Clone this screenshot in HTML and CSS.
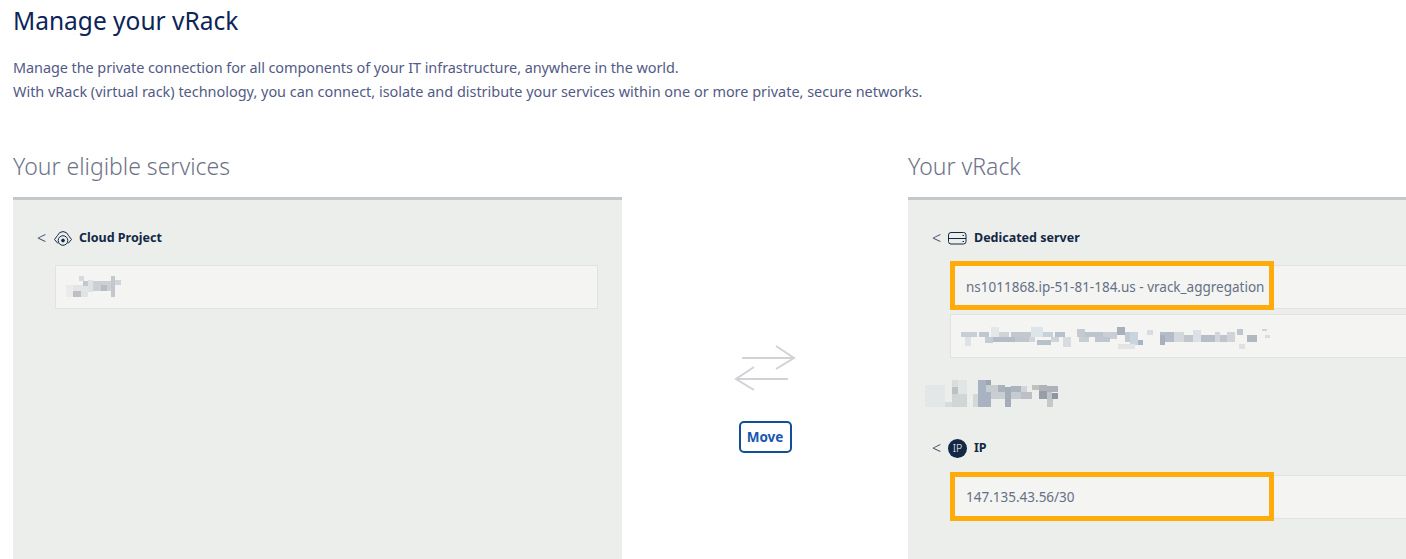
FILE: index.html
```html
<!DOCTYPE html>
<html lang="en">
<head>
<meta charset="utf-8">
<title>Manage your vRack</title>
<link rel="stylesheet" href="styles.css">
</head>
<body>
<header class="intro">
  <h1 class="title">Manage your vRack</h1>
  <p class="lead"><span class="lead-first">Manage the private connection for all components of your IT infrastructure, anywhere in the world.</span><br>With vRack (virtual rack) technology, you can connect, isolate and distribute your services within one or more private, secure networks.</p>
</header>
<main class="columns">
  <section class="col col-left">
    <h2 class="col-title">Your eligible services</h2>
    <div class="panel">
      <div class="group-head">
        <span class="chev">&lt;</span>
        <svg class="ico" width="20" height="20" viewBox="0 0 20 20" fill="none" stroke="#122844" stroke-width="1"><path d="M5 15.500 1.500 11.500 4.500 7.500A6 6.500 0 0 1 15.500 7.500L18.500 11.500 15 15.500"/><circle cx="10" cy="12.500" r="4.800"/><circle cx="10" cy="12.500" r="1.400" fill="#122844"/></svg>
        <span class="group-name">Cloud Project</span>
      </div>
      <div class="item item-left">
        <svg class="blur blur-a" width="70" height="32" viewBox="0 0 70 32">
          <rect x="6" y="13" width="8" height="12" fill="#ebebeb"/>
          <rect x="13" y="13" width="20" height="6" fill="#e3e4e4"/>
          <rect x="13" y="19" width="8" height="6" fill="#bcc0c6"/>
          <rect x="21" y="19" width="7" height="6" fill="#e2e3e3"/>
          <rect x="19" y="4" width="5" height="5" fill="#d6dade"/>
          <rect x="23" y="9" width="5" height="5" fill="#c4c8ce"/>
          <rect x="28" y="8" width="5" height="12" fill="#dfe1e2"/>
          <rect x="33" y="9" width="18" height="10" fill="#ccd0d4"/>
          <rect x="41" y="13" width="6" height="6" fill="#b8bdc4"/>
          <rect x="51" y="4" width="4" height="21" fill="#c4c8ce"/>
          <rect x="55" y="8" width="6" height="5" fill="#d2d5d8"/>
        </svg>
      </div>
    </div>
  </section>
  <section class="middle">
    <svg class="arrows" width="62" height="46" viewBox="0 0 62 46" fill="none" stroke="#d0d2d6" stroke-width="2"><path d="M8 13H60M42 1 60 13 42 24"/><path d="M54 34H2M20 22 2 34 20 45"/></svg>
    <button class="move" type="button">Move</button>
  </section>
  <section class="col col-right">
    <h2 class="col-title">Your vRack</h2>
    <div class="panel panel-right">
      <div class="group-head">
        <span class="chev">&lt;</span>
        <svg class="ico" width="20" height="20" viewBox="0 0 20 20" fill="none" stroke="#122844" stroke-width="1"><rect x="0.500" y="4.500" width="17.500" height="11.500" rx="2.500"/><path d="M0.500 10.500H18"/><path d="M14.500 7.500h1.500M14.500 13.500h1.500"/></svg>
        <span class="group-name">Dedicated server</span>
      </div>
      <div class="item item-right"><span class="item-text">ns1011868.ip-51-81-184.us - vrack_aggregation</span><span class="mark"></span></div>
      <div class="item item-right item-next">
        <svg class="blur blur-b" width="325" height="30" viewBox="0 0 325 30">
          <rect x="6" y="10" width="16" height="5" fill="#c8ced4"/>
          <rect x="10" y="15" width="6" height="9" fill="#dfe2e4"/>
          <rect x="24" y="10" width="10" height="5" fill="#c0c7ce"/>
          <rect x="36" y="5" width="8" height="10" fill="#e4e6e8"/>
          <rect x="44" y="10" width="10" height="5" fill="#d0d4d8"/>
          <rect x="56" y="10" width="20" height="5" fill="#c2c8ce"/>
          <rect x="76" y="5" width="12" height="10" fill="#dde4ea"/>
          <rect x="88" y="10" width="10" height="5" fill="#c8d0d8"/>
          <rect x="100" y="10" width="10" height="5" fill="#b8c0cc"/>
          <rect x="122" y="7" width="8" height="8" fill="#c4cad0"/>
          <rect x="130" y="10" width="18" height="5" fill="#bcc4cc"/>
          <rect x="148" y="10" width="7" height="5" fill="#c8ced4"/>
          <rect x="30" y="15" width="8" height="6" fill="#c5cbd2"/>
          <rect x="38" y="15" width="22" height="5" fill="#b4bcc8"/>
          <rect x="60" y="15" width="14" height="5" fill="#c0c6cc"/>
          <rect x="74" y="15" width="6" height="5" fill="#d0d6dc"/>
          <rect x="82" y="18" width="14" height="5" fill="#b8c0c8"/>
          <rect x="96" y="15" width="8" height="5" fill="#d0d4d8"/>
          <rect x="108" y="15" width="8" height="10" fill="#d8dce0"/>
          <rect x="124" y="15" width="10" height="5" fill="#c8cdd2"/>
          <rect x="140" y="15" width="15" height="5" fill="#c0c6ce"/>
          <rect x="155" y="10" width="7" height="7" fill="#c8ced4"/>
          <rect x="162" y="5" width="8" height="8" fill="#a8b0bc"/>
          <rect x="170" y="10" width="5" height="10" fill="#c0c8d0"/>
          <rect x="175" y="10" width="8" height="13" fill="#c8d4de"/>
          <rect x="183" y="18" width="5" height="5" fill="#a8b4c0"/>
          <rect x="192" y="8" width="6" height="5" fill="#d8dce0"/>
          <rect x="205" y="10" width="14" height="10" fill="#b4bcc8"/>
          <rect x="219" y="10" width="10" height="10" fill="#d4d8dc"/>
          <rect x="229" y="13" width="9" height="7" fill="#c0c6ce"/>
          <rect x="205" y="13" width="5" height="10" fill="#a8b0bc"/>
          <rect x="238" y="8" width="8" height="12" fill="#dde0e4"/>
          <rect x="246" y="13" width="14" height="7" fill="#b8bec8"/>
          <rect x="260" y="10" width="5" height="10" fill="#d2d6da"/>
          <rect x="265" y="13" width="7" height="7" fill="#c0c4cc"/>
          <rect x="272" y="10" width="8" height="10" fill="#d0d4d8"/>
          <rect x="282" y="7" width="6" height="6" fill="#c0c4cc"/>
          <rect x="292" y="13" width="10" height="7" fill="#b0b8c0"/>
          <rect x="307" y="7" width="5" height="2" fill="#d0d4d8"/>
          <rect x="310" y="13" width="5" height="3" fill="#d8dce0"/>
          <rect x="284" y="22" width="6" height="5" fill="#e0e0e0"/>
          <rect x="163" y="22" width="17" height="5" fill="#e4e4e4"/>
        </svg>
      </div>
      <svg class="blur-c" width="145" height="38" viewBox="0 0 145 38">
        <rect x="5" y="10" width="20" height="22" fill="#e4e7e7"/>
        <rect x="25" y="27" width="7" height="5" fill="#d8dbdb"/>
        <rect x="32" y="5" width="6" height="7" fill="#dadddd"/>
        <rect x="32" y="12" width="6" height="7" fill="#bcc2c4"/>
        <rect x="38" y="5" width="9" height="14" fill="#e2e5e5"/>
        <rect x="32" y="19" width="15" height="13" fill="#d0d5d5"/>
        <rect x="53" y="19" width="5" height="13" fill="#d5d8d8"/>
        <rect x="58" y="5" width="13" height="27" fill="#a8b2c0"/>
        <rect x="66" y="5" width="5" height="5" fill="#9ba5b2"/>
        <rect x="66" y="10" width="12" height="7" fill="#c6ccd0"/>
        <rect x="78" y="10" width="7" height="7" fill="#aab2ba"/>
        <rect x="71" y="17" width="14" height="7" fill="#c8ced2"/>
        <rect x="85" y="12" width="6" height="20" fill="#a4adb8"/>
        <rect x="91" y="11" width="10" height="6" fill="#aab4be"/>
        <rect x="91" y="17" width="10" height="7" fill="#c4ccd2"/>
        <rect x="101" y="11" width="6" height="6" fill="#d0d4d8"/>
        <rect x="101" y="17" width="11" height="7" fill="#bcc0c4"/>
        <rect x="112" y="10" width="7" height="5" fill="#c0c0c0"/>
        <rect x="119" y="10" width="8" height="6" fill="#b0b4b8"/>
        <rect x="127" y="11" width="11" height="6" fill="#aeb2b6"/>
        <rect x="119" y="16" width="8" height="8" fill="#969ea8"/>
        <rect x="127" y="17" width="5" height="7" fill="#c0c4c8"/>
        <rect x="132" y="18" width="6" height="6" fill="#8e96a4"/>
        <rect x="127" y="24" width="6" height="8" fill="#c4c8ca"/>
      </svg>
      <div class="group-head group-ip">
        <span class="chev">&lt;</span>
        <span class="ip-badge">IP</span>
        <span class="group-name">IP</span>
      </div>
      <div class="item item-right"><span class="item-text">147.135.43.56/30</span><span class="mark mark-ip"></span></div>
    </div>
  </section>
</main>
</body>
</html>
```
FILE: styles.css
```css
html, body { margin: 0; padding: 0; background: #fff; }
body { width: 1406px; height: 559px; overflow: hidden; font-family: "Noto Sans", "Open Sans", sans-serif; color: #525a85; }
.intro { padding: 4px 0 0 13px; }
.title { margin: 0; font-size: 24.500px; line-height: 34px; font-weight: 400; color: #0c2456; }
.lead { margin: 18px 0 0; font-size: 14.450px; line-height: 24px; color: #525a85; }
.lead-first { letter-spacing: -0.06px; }
.columns { display: flex; margin-top: 45px; padding-left: 13px; align-items: flex-start; }
.col-left { width: 609px; flex: none; }
.col-right { width: 520px; flex: none; }
.col-title { margin: 0; font-size: 23px; line-height: 34px; font-weight: 300; color: #6d7287; }
.panel { margin-top: 14px; height: 362px; box-sizing: border-box; background: #eceeec; border-top: 3px solid #c5c8cb; padding: 28px 24px 0 24px; }
.group-head { display: flex; align-items: center; height: 20px; font-size: 12.500px; font-weight: 700; color: #122844; }
.chev { width: 16px; font-weight: 300; font-size: 16px; color: #41506a; }
.ico { flex: none; margin-right: 6px; }
.group-name { line-height: 20px; }
.item { box-sizing: border-box; height: 44px; margin: 17px 0 0 18px; background: #f4f4f2; border: 1px solid #e2e2e0; display: flex; align-items: center; }
.item-left { width: 543px; }
.item-right { position: relative; width: 520px; }
.item-next { margin-top: 5px; }
.item-text { padding-left: 15px; font-size: 13.500px; color: #667085; }
.mark { position: absolute; left: -1px; top: -5px; width: 324px; height: 49px; box-sizing: border-box; border: 5px solid #ffab0a; }
.mark-ip { top: -4px; }
.blur { flex: none; align-self: flex-start; margin-left: 4px; }
.blur-a { margin-top: 6px; }
.blur-b { margin-top: 7px; }
.blur-c { display: block; margin: 17px 0 0 -12px; }
.group-ip { margin-top: 25px; }
.ip-badge { width: 19px; height: 19px; margin-right: 7px; border-radius: 50%; background: #122844; color: #fff; font-size: 10.500px; font-weight: 300; display: flex; align-items: center; justify-content: center; }
.middle { width: 286px; flex: none; display: flex; flex-direction: column; align-items: center; padding-top: 196px; box-sizing: border-box; }
.arrows { display: block; }
.move { margin-top: 30px; width: 53px; height: 32px; padding: 0; border: 2px solid #124f96; border-radius: 5px; background: #fff; color: #1a56b0; font: 700 13.500px "Noto Sans", sans-serif; }
```
